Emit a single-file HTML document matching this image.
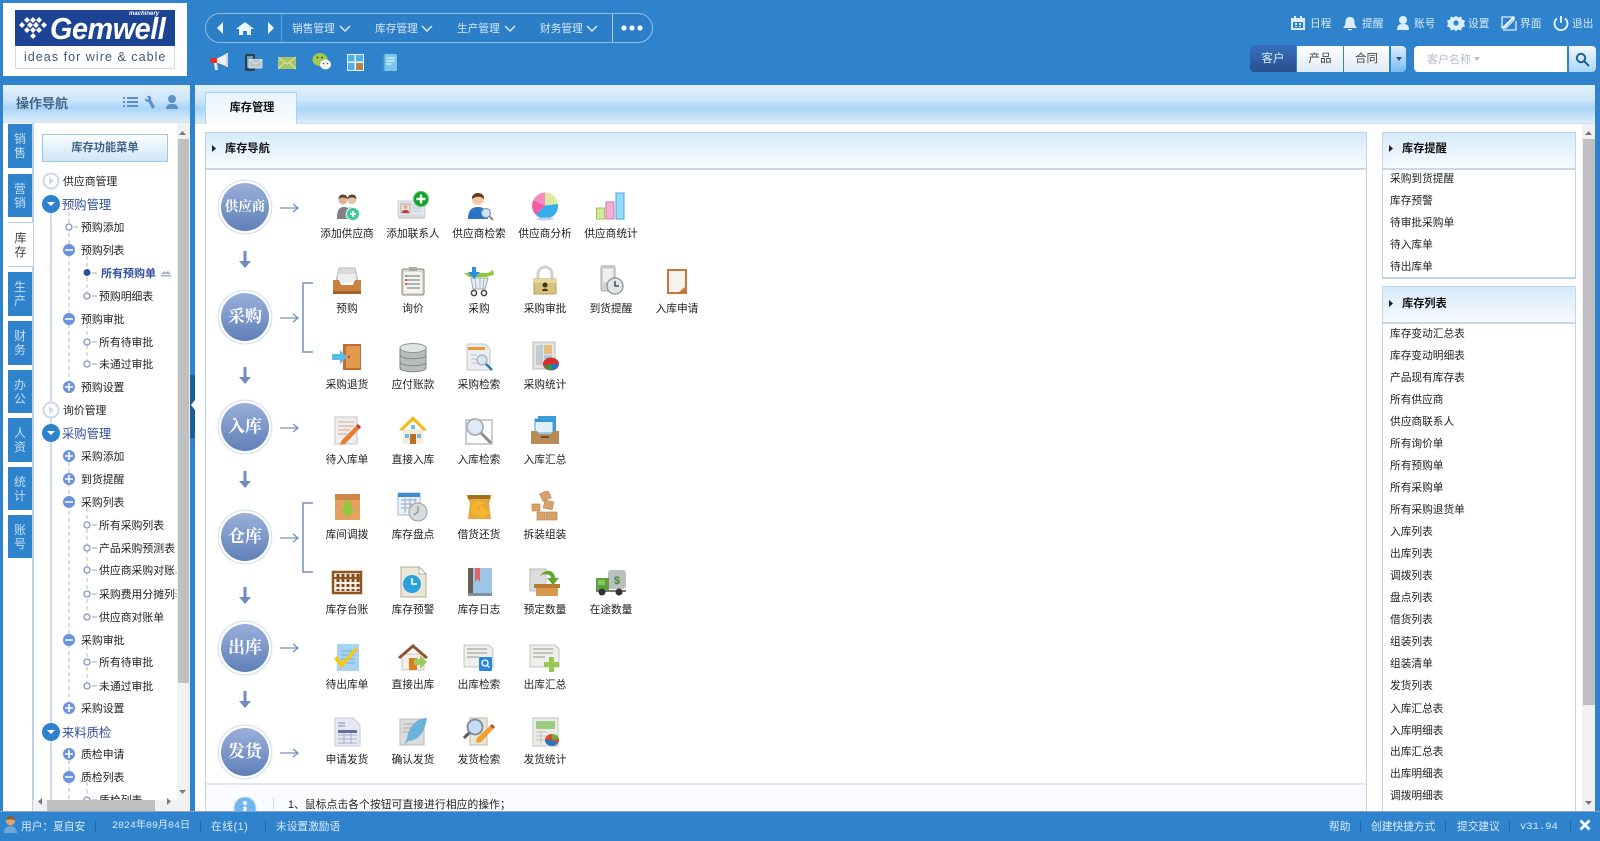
<!DOCTYPE html>
<html lang="zh"><head><meta charset="utf-8"><title>库存管理</title>
<style>
html,body{margin:0;padding:0;width:1600px;height:841px;overflow:hidden;background:#2f83cc}
body{position:relative;font:10.7px/16px "Liberation Sans","Noto Sans CJK SC",sans-serif;color:#1e1e1e;filter:blur(.35px)}
div,span,b,svg{position:absolute}
.t,.l,.w{white-space:nowrap;margin-top:-7px}
.l{width:90px;margin-left:-45px;text-align:center}
.w{color:#d9ecfb}
.i{width:32px;height:32px;margin:-16px 0 0 -16px}
.tab{left:8px;width:24px;height:44px;background:#2f83cc;color:#c4dff7;font-size:12px;line-height:14px;text-align:center;display:flex;align-items:center;justify-content:center}
.ph{background:linear-gradient(#d6eafa,#f6fbff);border-bottom:2px solid #c7d8ec}
.pn{background:#fff;border:1px solid #c2d4ea;box-sizing:border-box}
.h{font-weight:bold;font-size:11.2px;color:#111}
.g{background:linear-gradient(#e0f1fd 0,#cde6fa 40%,#a9d5f8 62%,#dcedfb 100%)}
.big{font-size:12.3px;color:#34509e}
.c{border-radius:50%;width:48px;height:48px;margin:-24px 0 0 -24px;background:linear-gradient(#9ab0da,#5f80b8);box-shadow:0 0 0 2.2px #fff,0 0 0 3.5px #d9e2f1;color:#fff;font:bold 17px/47px "Liberation Serif","Noto Serif CJK SC",serif;text-align:center}
.sep{width:1px;height:11px;background:#1f6aa8;top:820px}
</style></head><body>

<!-- logo -->
<div style="left:3px;top:3px;width:184px;height:73px;background:#fff"></div>
<div style="left:15px;top:10px;width:160px;height:59px;border:1px solid #d4dae4;box-sizing:border-box;background:#fff"></div>
<div style="left:15px;top:10px;width:160px;height:36px;background:#1d4493"></div>
<svg style="left:18px;top:17px" width="30" height="22" viewBox="0 0 30 22" fill="#fff"><path d="M9 0l3 3-3 3-3-3zM15 0l3 3-3 3-3-3zM21 0l3 3-3 3-3-3zM4 5l3 3-3 3-3-3zM12 5l3 3-3 3-3-3zM18 5l3 3-3 3-3-3zM26 5l3 3-3 3-3-3zM9 10l3 3-3 3-3-3zM15 10l3 3-3 3-3-3zM21 10l3 3-3 3-3-3zM15 16l3 3-3 3-3-3z"/></svg>
<span style="left:50px;top:12px;font:italic bold 31px/34px 'Liberation Sans',sans-serif;color:#fff;letter-spacing:-.5px;transform:scaleX(.93);transform-origin:0 0">Gemwell</span>
<span style="left:129px;top:9px;font:italic bold 6px/10px 'Liberation Sans',sans-serif;color:#fff">machinery</span>
<span style="left:24px;top:49px;font:12.6px/16px 'Liberation Sans',sans-serif;color:#3e5878;letter-spacing:1px">ideas for wire &amp; cable</span>

<!-- nav pill -->
<div style="left:205px;top:13px;width:448px;height:30px;border:1px solid #8ec1ea;border-radius:16px;box-sizing:border-box;background:#2c7ec6"></div>
<div style="left:281px;top:14px;width:1px;height:28px;background:#5ba0da"></div>
<div style="left:612px;top:14px;width:1px;height:28px;background:#a3cff0"></div>
<svg style="left:214px;top:20px" width="64" height="16" viewBox="0 0 64 16" fill="#eaf5fd"><path d="M9 2v12L3 8zM54 2v12l6-6z"/><path d="M31 2l9 7h-3v6h-4v-4h-4v4h-4V9h-3z"/></svg>
<span class="w" style="left:292px;top:28px;color:#d6e9f9">销售管理</span>
<span class="w" style="left:375px;top:28px;color:#d6e9f9">库存管理</span>
<span class="w" style="left:457px;top:28px;color:#d6e9f9">生产管理</span>
<span class="w" style="left:540px;top:28px;color:#d6e9f9">财务管理</span>
<svg style="left:338px;top:24px" width="260" height="9" viewBox="0 0 260 9" fill="none" stroke="#dceefb" stroke-width="1.4"><path d="M2 2l5 5 5-5M84 2l5 5 5-5M167 2l5 5 5-5M249 2l5 5 5-5"/></svg>
<svg style="left:620px;top:24px" width="24" height="8" viewBox="0 0 24 8" fill="#f0f8fe"><circle cx="4" cy="4" r="2.6"/><circle cx="12" cy="4" r="2.6"/><circle cx="20" cy="4" r="2.6"/></svg>

<!-- toolbar icons -->
<svg style="left:209px;top:52px" width="20" height="20" viewBox="0 0 20 20"><path d="M19 1v14L9 11H6V6h3z" fill="#eef2f5"/><path d="M17 1h2v14h-2z" fill="#cfd8de"/><path d="M1 6h7v5H1z" fill="#e0342c"/><path d="M5 11h3l1 7H6z" fill="#e9e9e9"/></svg>
<svg style="left:243px;top:52px" width="20" height="20" viewBox="0 0 20 20"><rect x="2" y="2" width="10" height="17" rx="1.500" fill="#2c3f50"/><rect x="4" y="4" width="6" height="12" fill="#6a9cc0"/><rect x="6" y="7.500" width="13" height="8.500" fill="#b9c4cc" stroke="#e6edf1" stroke-width=".8"/><path d="M6 8l6.500 4L19 8" fill="none" stroke="#eef2f5" stroke-width=".7"/></svg>
<svg style="left:277px;top:55px" width="20" height="16" viewBox="0 0 20 16"><rect x="1" y="2" width="18" height="12" fill="#a9c46c"/><path d="M1 2l9 7 9-7M1 14l7-7M19 14l-7-7" fill="none" stroke="#dfe39a" stroke-width="1.100"/></svg>
<svg style="left:312px;top:52px" width="20" height="20" viewBox="0 0 20 20"><ellipse cx="8" cy="7.500" rx="7.500" ry="6.500" fill="#a5c94c"/><ellipse cx="13.500" cy="12.500" rx="5.500" ry="5" fill="#f4f6ee"/><circle cx="5.500" cy="5.500" r="1" fill="#35601e"/><circle cx="10" cy="5.500" r="1" fill="#35601e"/><circle cx="11.500" cy="11.500" r=".8" fill="#556"/><circle cx="15.500" cy="11.500" r=".8" fill="#556"/></svg>
<svg style="left:345px;top:52px" width="20" height="20" viewBox="0 0 20 20"><rect x="2" y="2" width="17" height="17" fill="#e8f4fc"/><rect x="3" y="3" width="6.500" height="6.500" fill="#4fb0e8"/><rect x="11" y="3" width="7" height="6.500" fill="#4fb0e8"/><rect x="3" y="11" width="6.500" height="7" fill="#4fb0e8"/><rect x="11" y="11" width="7" height="7" fill="#b48448"/></svg>
<svg style="left:379px;top:52px" width="20" height="20" viewBox="0 0 20 20"><rect x="3" y="2" width="15" height="17" rx="1.500" fill="#7cc6ec"/><rect x="3" y="2" width="2.500" height="17" fill="#3b8dc4"/><path d="M7.500 6h8M7.500 9h8M7.500 12h5" stroke="#e6f5fd" stroke-width="1.200"/></svg>

<!-- top right links -->
<svg style="left:1290px;top:15px" width="300" height="16" viewBox="0 0 300 16" fill="#dceefb">
<path d="M1 3h3V1h2v2h4V1h2v2h3v12H1zM3 7v6h10V7z"/><path d="M5 8h2v2H5zM9 8h2v2H9zM5 11h2v1H5zM9 11h2v1H9z"/>
<path d="M60 2c3 0 4.500 2 4.500 5 0 3 1 4 2 5v1h-13v-1c1-1 2-2 2-5 0-3 1.500-5 4.500-5zM58 14h4c0 2-4 2-4 0z"/>
<circle cx="113" cy="5" r="4"/><path d="M107 15c0-5 2-6 6-6s6 1 6 6z"/>
<path d="M166 1l2 2 3-1 1 3 3 1-1 3 1 3-3 1-1 3-3-1-2 2-2-2-3 1-1-3-3-1 1-3-1-3 3-1 1-3 3 1z" transform="translate(0 -.5)"/><circle cx="166" cy="8" r="2.600" fill="#2f83cc"/>
<path d="M212 2h12v3l-8 8h-4zM226 6v9h-13" fill="none" stroke="#dceefb" stroke-width="1.300"/><path d="M213 13l11-11" stroke="#fff" stroke-width="2"/>
<path d="M267 3.500a6.500 6.500 0 1 0 8 0" fill="none" stroke="#eaf5fd" stroke-width="1.800"/><path d="M270.100 1h1.800v7h-1.800z" fill="#eaf5fd"/>
</svg>
<span class="w" style="left:1310px;top:22.500px">日程</span>
<span class="w" style="left:1362px;top:22.500px">提醒</span>
<span class="w" style="left:1414px;top:22.500px">账号</span>
<span class="w" style="left:1468px;top:22.500px">设置</span>
<span class="w" style="left:1520px;top:22.500px">界面</span>
<span class="w" style="left:1572px;top:22.500px">退出</span>

<!-- search controls -->
<div style="left:1250px;top:45px;width:46px;height:27px;border-radius:4px 0 0 4px;background:linear-gradient(#3a6fbc,#28508f);color:#dcecfb;text-align:center;line-height:29px;font-size:11.5px">客户</div>
<div style="left:1297px;top:46px;width:46px;height:26px;background:linear-gradient(#fff,#dfeaf6);text-align:center;line-height:27px;color:#444;font-size:11.5px">产品</div>
<div style="left:1344px;top:46px;width:45px;height:26px;background:linear-gradient(#fff,#dfeaf6);text-align:center;line-height:27px;color:#444;font-size:11.5px">合同</div>
<div style="left:1391px;top:46px;width:15px;height:26px;border-radius:0 4px 4px 0;background:linear-gradient(#dff0fc,#78bbef)"></div>
<svg style="left:1395px;top:56px" width="8" height="6"><path d="M1 1h6L4 5z" fill="#245a92"/></svg>
<div style="left:1414px;top:46px;width:153px;height:26px;background:#fff;border-radius:4px 0 0 4px"></div>
<span class="t" style="left:1427px;top:58.500px;color:#b3bdc8;font-size:11px">客户名称</span>
<svg style="left:1473px;top:56px" width="8" height="6"><path d="M1 1h6L4 5z" fill="#b3bdc8"/></svg>
<div style="left:1569px;top:46px;width:27px;height:26px;border-radius:0 4px 4px 0;background:linear-gradient(#f2f9fe,#a8d6f8)"></div>
<svg style="left:1575px;top:52px" width="15" height="15" viewBox="0 0 15 15" fill="none" stroke="#1f5f94" stroke-width="2"><circle cx="6" cy="6" r="4.200"/><path d="M9 9l5 5"/></svg>

<!-- sidebar -->
<div style="left:3px;top:85px;width:187px;height:726px;background:#fff"></div>
<div class="g" style="left:3px;top:85px;width:187px;height:37px;border-bottom:1px solid #d4e3f2"></div>
<span class="t" style="left:16px;top:103px;font-size:13px;font-weight:bold;color:#436688">操作导航</span>
<svg style="left:122px;top:94px" width="58" height="17" viewBox="0 0 58 17" fill="#5e8fc6"><path d="M1 3h2v2H1zM5 3h11v2H5zM1 7h2v2H1zM5 7h11v2H5zM1 11h2v2H1zM5 11h11v2H5z"/><path d="M25 2c3-1 5 1 4 4l4 7-2.500 2-4-7c-3 0-4-2-3-4l2 2 1-1z"/><circle cx="50" cy="5" r="4"/><path d="M44 15c0-4 2-5 6-5s6 1 6 5z"/></svg>
<div style="left:32px;top:123px;width:1.500px;height:688px;background:#bcd0e8"></div>

<div class="tab" style="top:124px">销<br>售</div>
<div class="tab" style="top:174px;height:43px">营<br>销</div>
<div class="tab" style="top:222px;height:45px;width:25px;background:#fff;color:#444;border-top:1px solid #b7cde4;border-bottom:1px solid #b7cde4;box-sizing:border-box;z-index:2">库<br>存</div>
<div class="tab" style="top:272px">生<br>产</div>
<div class="tab" style="top:321px">财<br>务</div>
<div class="tab" style="top:370px;height:43px">办<br>公</div>
<div class="tab" style="top:418px">人<br>资</div>
<div class="tab" style="top:467px;height:43px">统<br>计</div>
<div class="tab" style="top:515px;height:43px">账<br>号</div>

<div style="left:42px;top:134px;width:126px;height:28px;box-sizing:border-box;border:1px solid #9cc6e2;background:linear-gradient(#fafdff,#cfe6f7);text-align:center;font-weight:bold;font-size:11.2px;line-height:27px;color:#3f6488">库存功能菜单</div>

<!-- tree -->
<div style="left:0;top:0;width:176.500px;height:800px;clip-path:inset(123px 0 0 33px);font-size:10.85px">
<svg style="left:0;top:0" width="177" height="841" viewBox="0 0 177 841">
<g fill="none">
<path d="M51 204V800" stroke="#b9cde6" stroke-width="1.400"/>
<path d="M69 212V392M69 462V712M69 760V800" stroke="#b4b9c2" stroke-dasharray="4 3"/>
<path d="M87 256V296M87 324V364M87 508V617M87 646V686M87 782V800" stroke="#b4b9c2" stroke-dasharray="4 3"/>
<path d="M74 227h4M92 273h5M92 296h5M92 342h5M92 364h5M92 525h5M92 548h5M92 570h5M92 594h5M92 617h5M92 662h5M92 686h5M92 800h5" stroke="#9aa"/>
</g>
<g fill="#fff" stroke="#ccd8ea" stroke-width="2"><circle cx="51" cy="181" r="7.500"/><circle cx="51" cy="410" r="7.500"/></g>
<path d="M49 177l5 4-5 4zM49 406l5 4-5 4z" fill="#cfd9e8"/>
<g fill="#2f83cc"><circle cx="51" cy="204" r="9"/><circle cx="51" cy="433" r="9"/><circle cx="51" cy="732" r="9"/></g>
<path d="M47 202h8l-4 4zM47 431h8l-4 4zM47 730h8l-4 4z" fill="#fff"/>
<g fill="#6b92dc"><circle cx="69" cy="250" r="6"/><circle cx="69" cy="319" r="6"/><circle cx="69" cy="387" r="6"/><circle cx="69" cy="456" r="6"/><circle cx="69" cy="479" r="6"/><circle cx="69" cy="502" r="6"/><circle cx="69" cy="640" r="6"/><circle cx="69" cy="708" r="6"/><circle cx="69" cy="754" r="6"/><circle cx="69" cy="777" r="6"/></g>
<path d="M65 250h8M65 319h8M65 387h8M69 383v8M65 456h8M69 452v8M65 479h8M69 475v8M65 502h8M65 640h8M65 708h8M69 704v8M65 754h8M69 750v8M65 777h8" stroke="#fff" stroke-width="1.600"/>
<g fill="#fff" stroke="#8398c6" stroke-width="1.300"><circle cx="69" cy="227" r="3"/><circle cx="87" cy="296" r="3"/><circle cx="87" cy="342" r="3"/><circle cx="87" cy="364" r="3"/><circle cx="87" cy="525" r="3"/><circle cx="87" cy="548" r="3"/><circle cx="87" cy="570" r="3"/><circle cx="87" cy="594" r="3"/><circle cx="87" cy="617" r="3"/><circle cx="87" cy="662" r="3"/><circle cx="87" cy="686" r="3"/><circle cx="87" cy="800" r="3"/></g>
<circle cx="87" cy="272.500" r="3.500" fill="#2c4f9c"/>
<path d="M161 274l3-3 2 1.500 2-1.500 3 3zM161 275h10v1.500h-10z" fill="#9fb2ca"/>
</svg>
<span class="t" style="left:63px;top:181px">供应商管理</span>
<span class="t big" style="left:62px;top:204px">预购管理</span>
<span class="t" style="left:81px;top:227px">预购添加</span>
<span class="t" style="left:81px;top:250px">预购列表</span>
<span class="t" style="left:101px;top:273px;color:#34509e;font-weight:bold;font-size:11px">所有预购单</span>
<span class="t" style="left:99px;top:296px">预购明细表</span>
<span class="t" style="left:81px;top:319px">预购审批</span>
<span class="t" style="left:99px;top:342px">所有待审批</span>
<span class="t" style="left:99px;top:364px">未通过审批</span>
<span class="t" style="left:81px;top:387px">预购设置</span>
<span class="t" style="left:63px;top:410px">询价管理</span>
<span class="t big" style="left:62px;top:433px">采购管理</span>
<span class="t" style="left:81px;top:456px">采购添加</span>
<span class="t" style="left:81px;top:479px">到货提醒</span>
<span class="t" style="left:81px;top:502px">采购列表</span>
<span class="t" style="left:99px;top:525px">所有采购列表</span>
<span class="t" style="left:99px;top:548px">产品采购预测表</span>
<span class="t" style="left:99px;top:570px">供应商采购对账单</span>
<span class="t" style="left:99px;top:594px">采购费用分摊列表</span>
<span class="t" style="left:99px;top:617px">供应商对账单</span>
<span class="t" style="left:81px;top:640px">采购审批</span>
<span class="t" style="left:99px;top:662px">所有待审批</span>
<span class="t" style="left:99px;top:686px">未通过审批</span>
<span class="t" style="left:81px;top:708px">采购设置</span>
<span class="t big" style="left:62px;top:732px">来料质检</span>
<span class="t" style="left:81px;top:754px">质检申请</span>
<span class="t" style="left:81px;top:777px">质检列表</span>
<span class="t" style="left:99px;top:800px">质检列表</span>
</div>
<!-- sidebar scrollbars -->
<div style="left:177px;top:123px;width:13px;height:677px;background:#f1f1f1"></div>
<div style="left:178px;top:139px;width:11px;height:544px;background:#c0c0c0"></div>
<div style="left:33px;top:800px;width:157px;height:11px;background:#f1f1f1"></div>
<div style="left:47px;top:800px;width:108px;height:11px;background:#c0c0c0"></div>
<svg style="left:33px;top:123px" width="157" height="688" viewBox="0 0 157 688" fill="#7a7a7a"><path d="M146 12h7l-3.500-4zM146 667h7l-3.500 4zM9 682v-7l-4 3.500zM134 675v7l4-3.500z"/></svg>
<div style="left:190px;top:375px;width:5px;height:63px;background:#185f94"></div>
<svg style="left:190px;top:400px" width="5" height="10"><path d="M5 0v10L1 5z" fill="#fff"/></svg>

<!-- main -->
<div style="left:195px;top:85px;width:1400px;height:726px;background:#fff"></div>
<div class="g" style="left:195px;top:85px;width:1400px;height:38px;border-bottom:1px solid #cfdfee"></div>
<div style="left:205px;top:92px;width:92px;height:32px;box-sizing:border-box;border:1px solid #a9d3f3;border-bottom:0;background:linear-gradient(#e9f5fe,#f9fdff);text-align:center;font-weight:bold;font-size:11.2px;line-height:30px;color:#111;padding-left:2px">库存管理</div>
<div style="left:1582px;top:124px;width:13px;height:687px;background:#f1f1f1"></div>
<div style="left:1583px;top:139px;width:12px;height:566px;background:#c0c0c0"></div>
<svg style="left:1582px;top:124px" width="13" height="687" viewBox="0 0 13 687" fill="#777"><path d="M3 11h7L6.500 7zM3 677h7l-3.500 4z"/></svg>

<!-- guide panel -->
<div class="pn" style="left:205px;top:132px;width:1162px;height:700px"></div>
<div class="ph" style="left:206px;top:133px;width:1160px;height:35px"></div>
<svg style="left:212px;top:145px" width="5" height="7"><path d="M0 0l4 3.500L0 7z" fill="#222"/></svg>
<span class="t h" style="left:225px;top:148px">库存导航</span>
<div style="left:206px;top:783px;width:1160px;height:50px;background:#f9fbfe;border-top:2px solid #e1e7f0"></div>
<svg style="left:233px;top:796px" width="24" height="24" viewBox="0 0 24 24"><circle cx="12" cy="12" r="11" fill="#6eb6ef" stroke="#bfe0f8"/><circle cx="12" cy="7" r="2" fill="#fff"/><path d="M10.500 10.500h3v8h-3z" fill="#fff"/></svg>
<div style="left:273px;top:797px;width:1px;height:16px;background:#d8dde5"></div>
<span class="t" style="left:288px;top:804px;color:#222;letter-spacing:.15px">1、鼠标点击各个按钮可直接进行相应的操作；</span>

<!-- flow -->
<div class="c" style="left:245px;top:207px;font-size:13.500px">供应商</div>
<div class="c" style="left:245px;top:317px">采购</div>
<div class="c" style="left:245px;top:427px">入库</div>
<div class="c" style="left:245px;top:537px">仓库</div>
<div class="c" style="left:245px;top:648px">出库</div>
<div class="c" style="left:245px;top:752px">发货</div>
<svg style="left:270px;top:190px" width="50" height="580" viewBox="0 0 50 580" fill="none" stroke="#7390bf" stroke-width="1.300"><path d="M10 18h18m-5-4l5 4-5 4M10 128h18m-5-4l5 4-5 4M10 238h18m-5-4l5 4-5 4M10 348h18m-5-4l5 4-5 4M10 458h18m-5-4l5 4-5 4M10 563h18m-5-4l5 4-5 4"/><path d="M43 93H33v69h10M43 313H33v69h10" stroke-width="1.500"/></svg>
<svg style="left:238px;top:250px" width="14" height="460" viewBox="0 0 14 460" fill="#6f8dbe"><path d="M5.500 1h3v10H13l-6 7-6-7h4.500zM5.500 117h3v10H13l-6 7-6-7h4.500zM5.500 221h3v10H13l-6 7-6-7h4.500zM5.500 337h3v10H13l-6 7-6-7h4.500zM5.500 441h3v10H13l-6 7-6-7h4.500z"/></svg>

<!-- row 1 -->
<svg class="i" style="left:347px;top:206px" viewBox="0 0 32 32"><path d="M6 29c0-9 2-12 7-12s7 3 7 12z" fill="#7e8285"/><path d="M14 28c0-9 3-11 7-11s7 2 7 11z" fill="#a6abad"/><circle cx="12" cy="10" r="4.500" fill="#dcb599"/><circle cx="21" cy="10" r="4.300" fill="#e4c4a8"/><path d="M7.500 9c0-6 9-6 9 0-3-2-6-2-9 0zM16.500 9c0-6 9-6 9 0-3-2-6-2-9 0z" fill="#5d4330"/><circle cx="22" cy="24" r="6.500" fill="#3ccb9a" stroke="#e9f6f2"/><path d="M19 24h6M22 21v6" stroke="#fff" stroke-width="2"/></svg>
<svg class="i" style="left:413px;top:206px" viewBox="0 0 32 32"><rect x="1" y="11" width="27" height="15" fill="#e3e7ec" stroke="#c8ced5"/><rect x="1" y="26" width="27" height="3" fill="#d3d7dc"/><rect x="4" y="14" width="9" height="9" fill="#f1e4d6" stroke="#aab"/><circle cx="8.500" cy="17" r="2" fill="#e7b08d"/><path d="M5 23c0-3 2-3 3.500-3s3.500 0 3.500 3z" fill="#c93b30"/><path d="M15 15h9M15 18h9M15 21h9" stroke="#bcc5cf"/><circle cx="24" cy="9" r="7.500" fill="#12a22b" stroke="#5cc96e"/><path d="M19.500 9h9M24 4.500v9" stroke="#fff" stroke-width="2.400"/></svg>
<svg class="i" style="left:479px;top:206px" viewBox="0 0 32 32"><path d="M5 29c0-9 4-12 10-12s10 3 10 12z" fill="#2a74c4"/><circle cx="15" cy="9" r="6" fill="#f4c8a6"/><path d="M9 9c-1-8 13-8 12 0-3-3-8-3-12 0z" fill="#6a3a20"/><circle cx="23" cy="23" r="4.500" fill="#cfe6f8" stroke="#8aa0b2" stroke-width="1.300"/><path d="M26 26l4 4" stroke="#889" stroke-width="2"/></svg>
<svg class="i" style="left:545px;top:206px" viewBox="0 0 32 32"><circle cx="16" cy="15.500" r="13" fill="#dfe9a0"/><path d="M16 15.500L4.500 10A13 13 0 0 0 7 25z" fill="#f05ca8"/><path d="M16 15.500L4.500 10A13 13 0 0 1 16 2.500z" fill="#f48bc2"/><path d="M16 15.500L29 14A13 13 0 0 1 7 25z" fill="#36aeea"/><ellipse cx="16" cy="29" rx="9" ry="1.500" fill="#c5d4de"/></svg>
<svg class="i" style="left:611px;top:206px" viewBox="0 0 32 32"><rect x="1.500" y="18" width="8" height="11" fill="#d4e99c" stroke="#9cc35a"/><rect x="11" y="12" width="8" height="17" fill="#f4aed4" stroke="#c97aa8"/><rect x="21" y="3" width="8" height="26" fill="#97daf8" stroke="#4aa6dc"/></svg>
<span class="l" style="left:347px;top:233px">添加供应商</span><span class="l" style="left:413px;top:233px">添加联系人</span><span class="l" style="left:479px;top:233px">供应商检索</span><span class="l" style="left:545px;top:233px">供应商分析</span><span class="l" style="left:611px;top:233px">供应商统计</span>

<!-- row 2 -->
<svg class="i" style="left:347px;top:281px" viewBox="0 0 32 32"><path d="M8 3h16l3 13H5z" fill="#d8dadd" stroke="#b9bcc0"/><rect x="7" y="9" width="18" height="9" fill="#eceef0"/><path d="M2 15h6l2 5h12l2-5h6v13H2z" fill="#c88140"/><path d="M2 26h28v3H2z" fill="#a2622a"/></svg>
<svg class="i" style="left:413px;top:281px" viewBox="0 0 32 32"><rect x="5" y="4" width="22" height="26" rx="1.500" fill="#ddd8cc" stroke="#8a8a82"/><rect x="7" y="7" width="18" height="21" fill="#f4f3ee"/><rect x="12" y="2" width="8" height="4" fill="#a9a9a2"/><path d="M10 11h13M10 15h13M10 19h13M10 23h13" stroke="#aeb2b5" stroke-width="2"/><path d="M8 10h2v2H8z" fill="#5a9"/><path d="M8 14h2v2H8zM8 18h2v2H8z" fill="#d55"/></svg>
<svg class="i" style="left:479px;top:281px" viewBox="0 0 32 32"><path d="M1 8h24l5-3 1 5-5 1-2 1H6z" fill="#8fc83e"/><path d="M8 13h17l-3 11H10z" fill="#e7edf2" stroke="#9aa9b5"/><path d="M12 13l1 11M17 13v11M21 13l-1 11" stroke="#a8b6c0"/><path d="M9 2h4v5h4l-6 7-6-7h4z" fill="#2f8be4"/><circle cx="11" cy="28" r="2.600" fill="#fff" stroke="#444" stroke-width="1.500"/><circle cx="21" cy="28" r="2.600" fill="#fff" stroke="#444" stroke-width="1.500"/></svg>
<svg class="i" style="left:545px;top:281px" viewBox="0 0 32 32"><path d="M9 15V9a7 7 0 0 1 14 0v6" fill="none" stroke="#d1d2cf" stroke-width="3"/><rect x="5" y="14" width="22" height="15" fill="#d7c27e" stroke="#b7a05e"/><path d="M5 14h22v4H5z" fill="#e7d89e"/><circle cx="16" cy="20" r="2.500" fill="#3c3620"/><path d="M13 26c0-3 6-3 6 0z" fill="#3c3620"/></svg>
<svg class="i" style="left:611px;top:281px" viewBox="0 0 32 32"><rect x="6" y="1" width="14" height="25" rx="2" fill="#d2d5d4" stroke="#a5a8a7"/><rect x="8" y="4" width="10" height="13" fill="#eef0ee"/><circle cx="20" cy="21" r="8" fill="#e2e5e8" stroke="#8d949a" stroke-width="1.300"/><path d="M20 16v5h4" fill="none" stroke="#333" stroke-width="1.300"/></svg>
<svg class="i" style="left:677px;top:281px" viewBox="0 0 32 32"><rect x="6" y="4" width="20" height="25" fill="#c9763a"/><rect x="8" y="6" width="16" height="21" fill="#f5f3ef"/><path d="M24 22v5h-6z" fill="#c9763a"/></svg>
<span class="l" style="left:347px;top:308px">预购</span><span class="l" style="left:413px;top:308px">询价</span><span class="l" style="left:479px;top:308px">采购</span><span class="l" style="left:545px;top:308px">采购审批</span><span class="l" style="left:611px;top:308px">到货提醒</span><span class="l" style="left:677px;top:308px">入库申请</span>

<!-- row 3 -->
<svg class="i" style="left:347px;top:357px" viewBox="0 0 32 32"><rect x="12" y="3" width="18" height="26" fill="#bd6f35"/><rect x="15" y="5" width="14" height="22" fill="#e49a4e"/><circle cx="18" cy="16" r="1" fill="#7a3f1a"/><path d="M1 13h8V9l7 7-7 7v-4H1z" fill="#58bde8"/></svg>
<svg class="i" style="left:413px;top:357px" viewBox="0 0 32 32"><g fill="#b9bcbc" stroke="#7f8382"><path d="M3 22v5c0 5 26 5 26 0v-5z"/><path d="M3 14v7c0 5 26 5 26 0v-7z"/><path d="M3 7v7c0 5 26 5 26 0V7z"/></g><ellipse cx="16" cy="7" rx="13" ry="4.500" fill="#e2e4e4" stroke="#8f9392"/></svg>
<svg class="i" style="left:479px;top:357px" viewBox="0 0 32 32"><path d="M4 3h18l5 5v21H4z" fill="#eceeef" stroke="#c5c8ca"/><path d="M5 6h17v3H5z" fill="#e69a35"/><path d="M8 14h6M8 18h8M8 22h7" stroke="#bcc4cc"/><circle cx="19" cy="19" r="5" fill="#d5e6f2" stroke="#a7b2ba" stroke-width="1.300"/><path d="M23 23l6 6" stroke="#2f7bb5" stroke-width="2.500"/></svg>
<svg class="i" style="left:545px;top:357px" viewBox="0 0 32 32"><rect x="4" y="1" width="22" height="27" fill="#e4e4e0" stroke="#bcbcb6"/><rect x="7" y="4" width="7" height="20" fill="#c2cbd1"/><rect x="15" y="4" width="8" height="9" fill="#e4bf80"/><rect x="15" y="14" width="8" height="4" fill="#a6c9e4"/><ellipse cx="22" cy="23" rx="8" ry="6.500" fill="#d92c2c"/><path d="M22 23l-7 2a8 6.500 0 0 0 9 4z" fill="#2a9b3f"/><path d="M22 23l8 0a8 6.500 0 0 1-6 6z" fill="#2a6fc9"/></svg>
<span class="l" style="left:347px;top:384px">采购退货</span><span class="l" style="left:413px;top:384px">应付账款</span><span class="l" style="left:479px;top:384px">采购检索</span><span class="l" style="left:545px;top:384px">采购统计</span>

<!-- row 4 -->
<svg class="i" style="left:347px;top:431px" viewBox="0 0 32 32"><rect x="4" y="2" width="22" height="27" fill="#eee" stroke="#c5c5c5"/><path d="M7 7h16M7 11h16M7 15h12M7 19h9" stroke="#e3a28c"/><path d="M27 9l3 3-16 17-5 1 2-5z" fill="#ea7a2c"/><path d="M27 9l3 3-2 2-3-3z" fill="#c33"/></svg>
<svg class="i" style="left:413px;top:431px" viewBox="0 0 32 32"><rect x="6" y="14" width="20" height="15" fill="#f2ecdd"/><path d="M16 1L2 15l3 1L16 6l11 10 3-1z" fill="#f2b922"/><rect x="13" y="19" width="6" height="10" fill="#b86f28"/><rect x="8" y="19" width="4" height="4" fill="#6cbce8"/><rect x="20" y="19" width="4" height="4" fill="#6cbce8"/><rect x="14" y="10" width="4" height="4" fill="#6cbce8"/></svg>
<svg class="i" style="left:479px;top:431px" viewBox="0 0 32 32"><rect x="3" y="5" width="26" height="24" fill="#fbfbfb" stroke="#bcbfc2" stroke-width="1.500"/><circle cx="12" cy="12" r="8" fill="#dcebf5" stroke="#a9b0b6" stroke-width="1.800"/><path d="M18 18l10 10" stroke="#8a8f94" stroke-width="3"/></svg>
<svg class="i" style="left:545px;top:431px" viewBox="0 0 32 32"><rect x="9" y="1" width="18" height="16" fill="#3a9ad8"/><rect x="6" y="4" width="18" height="14" fill="#dfeffb" stroke="#4aa2dc"/><path d="M6 4h18v3H6z" fill="#3a9ad8"/><path d="M2 16h6l2 3h12l2-3h6v13H2z" fill="#b98b58"/><path d="M12 22h8" stroke="#6e4e2a" stroke-width="2"/></svg>
<span class="l" style="left:347px;top:459px">待入库单</span><span class="l" style="left:413px;top:459px">直接入库</span><span class="l" style="left:479px;top:459px">入库检索</span><span class="l" style="left:545px;top:459px">入库汇总</span>

<!-- row 5 -->
<svg class="i" style="left:347px;top:507px" viewBox="0 0 32 32"><rect x="4" y="3" width="25" height="26" rx="1" fill="#e4a15f"/><path d="M4 3h25v6H4z" fill="#cf8543"/><path d="M13 10h7v8h4l-7.500 8L9 18h4z" fill="#8fca3f"/></svg>
<svg class="i" style="left:413px;top:507px" viewBox="0 0 32 32"><rect x="1" y="2" width="22" height="22" fill="#eef3fa" stroke="#a3b9d8"/><path d="M1 2h22v4H1z" fill="#3f8ad0"/><path d="M4 9h16M4 13h16M4 17h16M8 7v15M13 7v15M18 7v15" stroke="#8fa7cc"/><circle cx="21" cy="21" r="9" fill="#d8dbde" stroke="#9aa0a5"/><path d="M21 15v6l-4 3" fill="none" stroke="#777"/></svg>
<svg class="i" style="left:479px;top:507px" viewBox="0 0 32 32"><path d="M3 4h26l-3 8 2 16H5l2-16z" fill="#e7a83c"/><path d="M5 4h22v4H5z" fill="#a1701f"/><path d="M21 12c-6-4-13-1-13 6 0 4 5 6 9 6v5l10-8-10-7v5c-3 0-4-3-1-4z" fill="#f4b630"/></svg>
<svg class="i" style="left:545px;top:507px" viewBox="0 0 32 32"><g fill="#d9a26a" stroke="#b27f4c" stroke-width=".6"><rect x="12" y="1" width="9" height="8" transform="rotate(-25 16 5)"/><rect x="15" y="10" width="9" height="8" transform="rotate(12 20 14)"/><rect x="3" y="13" width="8" height="7"/><rect x="8" y="21" width="8" height="8"/><rect x="17" y="21" width="11" height="8"/></g></svg>
<span class="l" style="left:347px;top:534px">库间调拨</span><span class="l" style="left:413px;top:534px">库存盘点</span><span class="l" style="left:479px;top:534px">借货还货</span><span class="l" style="left:545px;top:534px">拆装组装</span>

<!-- row 6 -->
<svg class="i" style="left:347px;top:582px" viewBox="0 0 32 32"><rect x="2" y="6" width="28" height="21" fill="#f8f1e5" stroke="#8f5520" stroke-width="2.500"/><path d="M2 12h28" stroke="#8f5520" stroke-width="2"/><g stroke="#7d4718" stroke-width="3" stroke-dasharray="3 2"><path d="M7 8v17M12 8v17M17 8v17M22 8v17M27 8v17"/></g></svg>
<svg class="i" style="left:413px;top:582px" viewBox="0 0 32 32"><path d="M4 1h18l7 7v23H4z" fill="#ece7d6" stroke="#b2ad9c"/><path d="M22 1l7 7h-7z" fill="#fff" stroke="#b2ad9c"/><circle cx="15" cy="18" r="9" fill="#29a1de"/><path d="M15 12v6h5" fill="none" stroke="#fff" stroke-width="1.600"/></svg>
<svg class="i" style="left:479px;top:582px" viewBox="0 0 32 32"><rect x="5" y="2" width="24" height="28" fill="#9cc6e6"/><rect x="5" y="2" width="5" height="28" fill="#6a5e52"/><path d="M5 27h24v3H5z" fill="#87919a"/><path d="M12 2h5v14l-2.500-3L12 16z" fill="#e2646a"/></svg>
<svg class="i" style="left:545px;top:582px" viewBox="0 0 32 32"><rect x="1" y="3" width="16" height="22" fill="#dcdcdc" stroke="#bbb"/><path d="M11 10c5-8 15-6 15 2h4l-6 7-6-7h4c0-4-7-5-11-2z" fill="#5fa82e"/><rect x="7" y="19" width="22" height="11" fill="#d69a4e"/><path d="M5 18h26v4H5z" fill="#b97b31"/></svg>
<svg class="i" style="left:611px;top:582px" viewBox="0 0 32 32"><rect x="13" y="4" width="18" height="19" rx="3" fill="#bcc0c2"/><path d="M1 12h13v12H1z" fill="#5fa23b"/><path d="M3 14h7v5H3z" fill="#86c463"/><path d="M1 24h30v2H1z" fill="#777"/><circle cx="7" cy="26" r="3.500" fill="#333"/><circle cx="24" cy="26" r="3.500" fill="#333"/><text x="22" y="18" font-size="11" font-weight="bold" fill="#3d8b2c" text-anchor="middle" font-family="Liberation Sans">$</text></svg>
<span class="l" style="left:347px;top:609px">库存台账</span><span class="l" style="left:413px;top:609px">库存预警</span><span class="l" style="left:479px;top:609px">库存日志</span><span class="l" style="left:545px;top:609px">预定数量</span><span class="l" style="left:611px;top:609px">在途数量</span>

<!-- row 7 -->
<svg class="i" style="left:347px;top:657px" viewBox="0 0 32 32"><rect x="6" y="3" width="22" height="27" fill="#a6d4f5"/><path d="M10 10h14M10 14h14M10 18h14M10 22h14" stroke="#7daad0"/><path d="M3 18l3-3 5 6L25 6l2 2-16 19z" fill="#f6c70e"/></svg>
<svg class="i" style="left:413px;top:657px" viewBox="0 0 32 32"><rect x="5" y="13" width="22" height="16" fill="#f3f0ea" stroke="#c9c5bc"/><path d="M16 3L1 16l2 2L16 7l13 11 2-2z" fill="#8d5431"/><rect x="12" y="17" width="8" height="12" fill="#e07c22"/><path d="M17 18h6v-4l7 7-7 7v-4h-6z" fill="#9bcb5b"/></svg>
<svg class="i" style="left:479px;top:657px" viewBox="0 0 32 32"><path d="M1 4h25l4 4v18H1z" fill="#eeeeec" stroke="#c4c4c0"/><path d="M4 8h20M4 12h20M4 16h12" stroke="#b0b0ac" stroke-width="1.500"/><rect x="16" y="16" width="13" height="14" rx="1" fill="#2a86dc"/><circle cx="22" cy="22" r="3" fill="none" stroke="#fff" stroke-width="1.300"/><path d="M24 24l2.500 2.500" stroke="#fff" stroke-width="1.300"/></svg>
<svg class="i" style="left:545px;top:657px" viewBox="0 0 32 32"><path d="M1 4h25l4 4v18H1z" fill="#eeeeec" stroke="#c4c4c0"/><path d="M4 8h20M4 12h20M4 16h12" stroke="#b0b0ac" stroke-width="1.500"/><path d="M20 16h5v5h5v5h-5v5h-5v-5h-5v-5h5z" fill="#96c94f"/></svg>
<span class="l" style="left:347px;top:684px">待出库单</span><span class="l" style="left:413px;top:684px">直接出库</span><span class="l" style="left:479px;top:684px">出库检索</span><span class="l" style="left:545px;top:684px">出库汇总</span>

<!-- row 8 -->
<svg class="i" style="left:347px;top:732px" viewBox="0 0 32 32"><path d="M4 2h18l7 7v21H4z" fill="#e7e8f2" stroke="#c5c7d6"/><path d="M7 7h7M7 10h7" stroke="#7d8ab0"/><rect x="7" y="14" width="19" height="3" fill="#5f6f9e"/><path d="M7 19h19M7 23h19M7 27h19M13 17v11M20 17v11" stroke="#a6aec8"/></svg>
<svg class="i" style="left:413px;top:732px" viewBox="0 0 32 32"><rect x="3" y="3" width="24" height="26" fill="#dcdcdc" stroke="#bbb"/><path d="M6 8h15M6 12h10M6 16h8" stroke="#aaa"/><path d="M30 2C20 2 12 10 10 22l-3 8 4-5c11 0 17-10 19-23z" fill="#6cb3da"/></svg>
<svg class="i" style="left:479px;top:732px" viewBox="0 0 32 32"><path d="M7 2h17v27H7z" fill="#e9e7dd" stroke="#bbb9ad"/><circle cx="12" cy="11" r="7.500" fill="#c6def3" stroke="#7e8a96" stroke-width="1.800"/><path d="M6 17l-5 5" stroke="#555" stroke-width="3"/><path d="M29 8l3 3-14 15-5 1 1-5z" fill="#f1a02c"/><path d="M29 8l3 3-2 2-3-3z" fill="#cc4833"/></svg>
<svg class="i" style="left:545px;top:732px" viewBox="0 0 32 32"><rect x="4" y="2" width="25" height="28" fill="#ebece9" stroke="#c3c4bf"/><rect x="7" y="5" width="19" height="8" fill="#9ecb82"/><path d="M7 16h11M7 20h10M7 24h9M12 14v14" stroke="#c3c4bf"/><ellipse cx="23" cy="24" rx="7" ry="6" fill="#d94a2e"/><path d="M23 24l-7 0a7 6 0 0 0 13 3z" fill="#2476c8"/><path d="M23 24l0-6a7 6 0 0 1 7 5z" fill="#6bb134"/></svg>
<span class="l" style="left:347px;top:759px">申请发货</span><span class="l" style="left:413px;top:759px">确认发货</span><span class="l" style="left:479px;top:759px">发货检索</span><span class="l" style="left:545px;top:759px">发货统计</span>

<!-- right panels -->
<div class="pn" style="left:1382px;top:132px;width:194px;height:147px;border-bottom-width:2px"></div>
<div class="ph" style="left:1383px;top:133px;width:192px;height:35px"></div>
<svg style="left:1389px;top:145px" width="5" height="7"><path d="M0 0l4 3.500L0 7z" fill="#222"/></svg>
<span class="t h" style="left:1402px;top:148px">库存提醒</span>
<span class="t" style="left:1390px;top:178px">采购到货提醒</span>
<span class="t" style="left:1390px;top:200px">库存预警</span>
<span class="t" style="left:1390px;top:222px">待审批采购单</span>
<span class="t" style="left:1390px;top:244px">待入库单</span>
<span class="t" style="left:1390px;top:266px">待出库单</span>

<div class="pn" style="left:1382px;top:286px;width:194px;height:545px"></div>
<div class="ph" style="left:1383px;top:287px;width:192px;height:35px"></div>
<svg style="left:1389px;top:300px" width="5" height="7"><path d="M0 0l4 3.500L0 7z" fill="#222"/></svg>
<span class="t h" style="left:1402px;top:303px">库存列表</span>
<span class="t" style="left:1390px;top:333px">库存变动汇总表</span>
<span class="t" style="left:1390px;top:355px">库存变动明细表</span>
<span class="t" style="left:1390px;top:377px">产品现有库存表</span>
<span class="t" style="left:1390px;top:399px">所有供应商</span>
<span class="t" style="left:1390px;top:421px">供应商联系人</span>
<span class="t" style="left:1390px;top:443px">所有询价单</span>
<span class="t" style="left:1390px;top:465px">所有预购单</span>
<span class="t" style="left:1390px;top:487px">所有采购单</span>
<span class="t" style="left:1390px;top:509px">所有采购退货单</span>
<span class="t" style="left:1390px;top:531px">入库列表</span>
<span class="t" style="left:1390px;top:553px">出库列表</span>
<span class="t" style="left:1390px;top:575px">调拨列表</span>
<span class="t" style="left:1390px;top:597px">盘点列表</span>
<span class="t" style="left:1390px;top:619px">借货列表</span>
<span class="t" style="left:1390px;top:641px">组装列表</span>
<span class="t" style="left:1390px;top:663px">组装清单</span>
<span class="t" style="left:1390px;top:685px">发货列表</span>
<span class="t" style="left:1390px;top:708px">入库汇总表</span>
<span class="t" style="left:1390px;top:730px">入库明细表</span>
<span class="t" style="left:1390px;top:751px">出库汇总表</span>
<span class="t" style="left:1390px;top:773px">出库明细表</span>
<span class="t" style="left:1390px;top:795px">调拨明细表</span>

<!-- status bar -->
<div style="left:0;top:811px;width:1600px;height:30px;background:#2f83cc;border-top:1px solid #7fa8ca;box-sizing:border-box;z-index:5">
<svg style="left:3px;top:3px" width="15" height="20" viewBox="0 0 15 20"><circle cx="7.500" cy="6" r="4.500" fill="#e0a070"/><path d="M3 5c0-5 9-5 9 0-3-1-6-1-9 0z" fill="#8a5a2a"/><path d="M1 18c0-5 3-7 6.500-7S14 13 14 18z" fill="#6fa7d8"/></svg>
<span class="w" style="left:21px;top:13.500px">用户：夏自安</span>
<div class="sep" style="left:95px;top:9px"></div>
<span class="w" style="left:112px;top:13.500px;font-family:'Liberation Mono','Noto Sans CJK SC',monospace;font-size:10px">2024年09月04日</span>
<div class="sep" style="left:200px;top:9px"></div>
<span class="w" style="left:211px;top:13.500px;letter-spacing:.6px">在线(1)</span>
<div class="sep" style="left:265px;top:9px"></div>
<span class="w" style="left:276px;top:13.500px">未设置激励语</span>
<span class="w" style="left:1329px;top:13.500px">帮助</span>
<div class="sep" style="left:1360px;top:9px"></div>
<span class="w" style="left:1371px;top:13.500px">创建快捷方式</span>
<div class="sep" style="left:1445px;top:9px"></div>
<span class="w" style="left:1457px;top:13.500px">提交建议</span>
<div class="sep" style="left:1509px;top:9px"></div>
<span class="w" style="left:1520px;top:13.500px;font-family:'Liberation Mono',monospace;font-size:10.500px">v31.94</span>
<div class="sep" style="left:1570px;top:9px"></div>
<svg style="left:1579px;top:7px" width="12" height="12" viewBox="0 0 12 12"><path d="M1.500 1.500l9 9M10.500 1.500l-9 9" stroke="#f0f8fe" stroke-width="2.800"/></svg>
</div>
</body></html>
